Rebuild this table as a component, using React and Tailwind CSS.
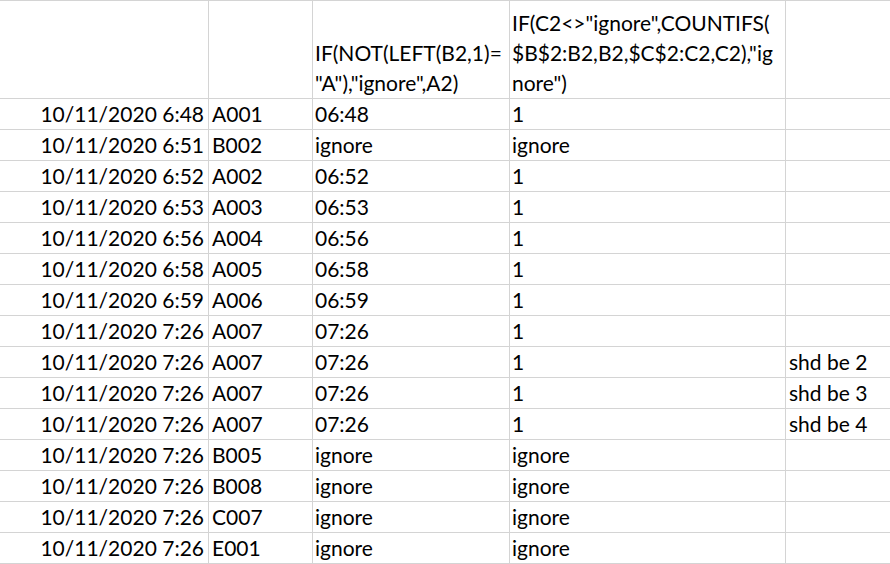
const rows = [
  ["10/11/2020 6:48", "A001", "06:48", "1", ""],
  ["10/11/2020 6:51", "B002", "ignore", "ignore", ""],
  ["10/11/2020 6:52", "A002", "06:52", "1", ""],
  ["10/11/2020 6:53", "A003", "06:53", "1", ""],
  ["10/11/2020 6:56", "A004", "06:56", "1", ""],
  ["10/11/2020 6:58", "A005", "06:58", "1", ""],
  ["10/11/2020 6:59", "A006", "06:59", "1", ""],
  ["10/11/2020 7:26", "A007", "07:26", "1", ""],
  ["10/11/2020 7:26", "A007", "07:26", "1", "shd be 2"],
  ["10/11/2020 7:26", "A007", "07:26", "1", "shd be 3"],
  ["10/11/2020 7:26", "A007", "07:26", "1", "shd be 4"],
  ["10/11/2020 7:26", "B005", "ignore", "ignore", ""],
  ["10/11/2020 7:26", "B008", "ignore", "ignore", ""],
  ["10/11/2020 7:26", "C007", "ignore", "ignore", ""],
  ["10/11/2020 7:26", "E001", "ignore", "ignore", ""],
];

// column A is a date (right aligned), the rest are text
const cellPad = [
  "justify-end pr-[4px]",
  "pl-[3px]",
  "pl-[2px]",
  "pl-[2px]",
  "pl-[3px]",
];

function Cell({ col, children, header }) {
  const last = col === 4;
  return (
    <div
      className={`flex whitespace-nowrap ${last ? "" : "border-r border-[#d4d4d4]"} ${
        header ? "items-end h-[97px]" : "items-start h-[30px]"
      } ${cellPad[col]}`}
    >
      <div className="leading-[30px]">{children}</div>
    </div>
  );
}

export default function App() {
  return (
    <div
      className="w-[890px] h-[564px] overflow-hidden bg-white text-black text-[21px]"
      style={{ fontFamily: "Lato, 'Open Sans', sans-serif" }}
    >
      <div className="grid grid-cols-[209px_104px_197px_276px_1fr] border-t border-[#d4d4d4]">
        {/* header row */}
        <div className="contents">
          <div className="col-span-5 grid grid-cols-subgrid border-b border-[#d4d4d4]">
            <Cell col={0} header />
            <Cell col={1} header />
            <Cell col={2} header>
              IF(NOT(LEFT(B2,1)=
              <br />
              "A"),"ignore",A2)
            </Cell>
            <Cell col={3} header>
              IF(C2&lt;&gt;"ignore",COUNTIFS(
              <br />
              $B$2:B2,B2,$C$2:C2,C2),"ig
              <br />
              nore")
            </Cell>
            <Cell col={4} header />
          </div>
        </div>

        {rows.map((r, i) => (
          <div
            key={i}
            className="col-span-5 grid grid-cols-subgrid border-b border-[#d4d4d4]"
          >
            {r.map((v, j) => (
              <Cell key={j} col={j}>
                {v}
              </Cell>
            ))}
          </div>
        ))}
      </div>
    </div>
  );
}
